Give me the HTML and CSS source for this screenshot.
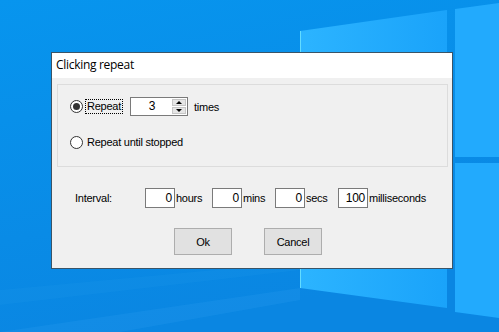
FILE: index.html
```html
<!DOCTYPE html>
<html lang="en">
<head>
    <meta charset="UTF-8">
    <title>Clicking repeat</title>
    <link rel="stylesheet" href="styles.css">
</head>
<body>

<div class="desktop">
    <svg class="wallpaper" width="499" height="332" viewBox="0 0 499 332">
        <defs>
            <linearGradient id="sky" x1="0" y1="0" x2="0.3" y2="1">
                <stop offset="0" stop-color="#0795ee"/>
                <stop offset="1" stop-color="#0a86e2"/>
            </linearGradient>
            <linearGradient id="pane" x1="0" y1="0" x2="1" y2="0">
                <stop offset="0" stop-color="#2cb4ff"/>
                <stop offset="1" stop-color="#1aa3fa"/>
            </linearGradient>
        </defs>
        <rect width="499" height="332" fill="url(#sky)"/>
        <polygon points="0,332 300,288 300,300 120,332" fill="#3aa6f2" opacity="0.18"/>
        <polygon points="0,290 300,262 300,270 0,305" fill="#44aef5" opacity="0.08"/>
        <polygon points="300,31 447,10 447,157 300,157" fill="url(#pane)"/>
        <polygon points="300,163 447,163 447,308 300,288" fill="url(#pane)"/>
        <polygon points="455,9 499,3 499,157 455,157" fill="#22aafd"/>
        <polygon points="455,163 499,163 499,318 455,312" fill="#22aafd"/>
        <line x1="300.5" y1="31" x2="300.5" y2="288" stroke="#63dcff" stroke-width="1"/>
    </svg>

    <div class="dialog">
        <div class="title-bar">Clicking repeat</div>
        <div class="dialog-body">
            <div class="group">
                <div class="group-row">
                    <span class="radio checked"></span>
                    <span class="radio-label focused">Repeat</span>
                    <div class="spin">
                        <span class="spin-value">3</span>
                        <div class="spin-buttons">
                            <span class="spin-btn"><span class="arrow-up"></span></span>
                            <span class="spin-btn"><span class="arrow-down"></span></span>
                        </div>
                    </div>
                    <span class="after-label">times</span>
                </div>
                <div class="group-row second">
                    <span class="radio"></span>
                    <span class="radio-label">Repeat until stopped</span>
                </div>
            </div>

            <div class="interval-row">
                <span class="interval-label">Interval:</span>
                <span class="num-box">0</span><span class="unit unit-hours">hours</span>
                <span class="num-box">0</span><span class="unit unit-mins">mins</span>
                <span class="num-box">0</span><span class="unit unit-secs">secs</span>
                <span class="num-box">100</span><span class="unit">milliseconds</span>
            </div>

            <div class="button-row">
                <button class="win-btn">Ok</button>
                <button class="win-btn">Cancel</button>
            </div>
        </div>
    </div>
</div>

</body>
</html>
```

FILE: styles.css
```css
* {
    box-sizing: border-box;
}
body {
    margin: 0;
    width: 499px;
    height: 332px;
    overflow: hidden;
    font-family: "Liberation Sans", Arial, sans-serif;
    font-size: 11px;
    letter-spacing: -0.25px;
    color: #000000;
}
.desktop {
    position: relative;
    width: 499px;
    height: 332px;
}
.wallpaper {
    position: absolute;
    left: 0;
    top: 0;
}
.dialog {
    position: absolute;
    left: 51px;
    top: 52px;
    width: 402px;
    height: 217px;
    border: 1px solid #3a5467;
    background: #f0f0f0;
    display: flex;
    flex-direction: column;
}
.title-bar {
    height: 25px;
    background: #ffffff;
    padding-left: 4px;
    font-family: "Open Sans", "Noto Sans", sans-serif;
    font-size: 12px;
    letter-spacing: -0.3px;
    line-height: 24px;
    color: #000000;
}
.dialog-body {
    padding: 6px 4px 0 5px;
}
.group {
    height: 83px;
    border: 1px solid #dcdcdc;
    padding: 12px 0 0 12px;
}
.group-row {
    display: flex;
    align-items: center;
    height: 19px;
}
.group-row.second {
    margin-top: 17px;
}
.radio {
    width: 13px;
    height: 13px;
    border: 1px solid #333333;
    border-radius: 50%;
    background: #ffffff;
    display: flex;
    align-items: center;
    justify-content: center;
}
.radio.checked::after {
    content: "";
    width: 7px;
    height: 7px;
    border-radius: 50%;
    background: #333333;
}
.radio-label {
    margin-left: 2px;
    padding: 0 1px;
    line-height: 13px;
    border: 1px solid transparent;
}
.radio-label.focused {
    border: 1px dotted #000000;
}
.spin {
    margin-left: 7px;
    width: 58px;
    height: 19px;
    border: 1px solid #7a7a7a;
    background: #ffffff;
    display: flex;
}
.spin-value {
    flex: 1;
    text-align: center;
    line-height: 17px;
    font-size: 12px;
    padding-left: 2px;
}
.spin-buttons {
    width: 16px;
    display: flex;
    flex-direction: column;
    padding: 1px;
    gap: 1px;
}
.spin-btn {
    flex: 1;
    background: #e5e5e5;
    border: 1px solid #c6c6c6;
    display: flex;
    align-items: center;
    justify-content: center;
}
.arrow-up {
    width: 0;
    height: 0;
    border-left: 3px solid transparent;
    border-right: 3px solid transparent;
    border-bottom: 3px solid #000000;
}
.arrow-down {
    width: 0;
    height: 0;
    border-left: 3px solid transparent;
    border-right: 3px solid transparent;
    border-top: 3px solid #000000;
}
.after-label {
    margin-left: 6px;
}
.interval-row {
    display: flex;
    align-items: center;
    height: 20px;
    margin-top: 21px;
    padding-left: 18px;
}
.interval-label {
    width: 70px;
}
.num-box {
    width: 30px;
    height: 20px;
    border: 1px solid #7a7a7a;
    background: #ffffff;
    text-align: right;
    padding-right: 2px;
    line-height: 18px;
    font-size: 12px;
}
.unit {
    padding-left: 1px;
}
.unit-hours {
    width: 37px;
}
.unit-mins {
    width: 33px;
}
.unit-secs {
    width: 33px;
}
.button-row {
    display: flex;
    justify-content: center;
    gap: 32px;
    margin-top: 20px;
    padding-right: 9px;
}
.win-btn {
    width: 58px;
    height: 27px;
    background: #e1e1e1;
    border: 1px solid #adadad;
    font-family: "Liberation Sans", Arial, sans-serif;
    font-size: 11px;
    letter-spacing: -0.25px;
    color: #000000;
    padding: 0;
}
```
